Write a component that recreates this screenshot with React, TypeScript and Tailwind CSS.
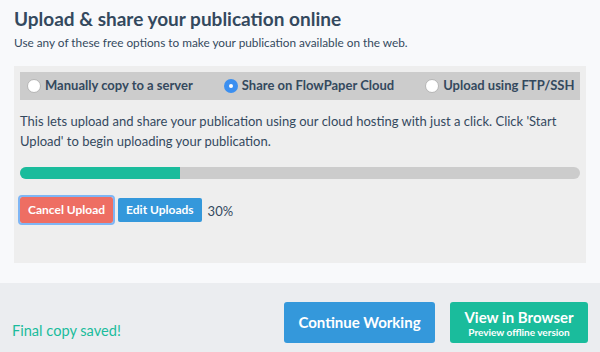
import React from "react";

function Radio({ checked, label }: { checked?: boolean; label: string }) {
  return (
    <label className="flex items-center gap-[4px]">
      {checked ? (
        <span className="w-[14px] h-[14px] rounded-full bg-[#3b8ff0] flex items-center justify-center">
          <span className="w-[4px] h-[4px] rounded-full bg-white" />
        </span>
      ) : (
        <span className="w-[14px] h-[14px] rounded-full bg-white border border-[#b5b5b5]" />
      )}
      <span className="text-[13px] font-bold text-[#34495e]">{label}</span>
    </label>
  );
}

export default function App() {
  return (
    <div
      className="w-[600px] h-[352px] bg-[#f8f9fb] flex flex-col"
      style={{ fontFamily: "Lato, 'Open Sans', sans-serif" }}
    >
      <div className="px-[14px] pt-[6px] flex-1">
        <h1 className="text-[19px] font-bold text-[#34495e] leading-[25px]">
          Upload &amp; share your publication online
        </h1>
        <p className="text-[11.8px] text-[#34495e] leading-[16px] mt-[4px]">
          Use any of these free options to make your publication available on the web.
        </p>
        <div className="mt-[15px] w-[572px] h-[197px] bg-[#eeeeee] px-[6px] pt-[6px]">
          <div className="h-[28px] bg-[#cccccc] flex items-center pl-[7px] gap-[31px]">
            <Radio label="Manually copy to a server" />
            <Radio checked label="Share on FlowPaper Cloud" />
            <Radio label="Upload using FTP/SSH" />
          </div>
          <p className="text-[13px] text-[#34495e] leading-[20px] mt-[11px]">
            This lets upload and share your publication using our cloud hosting with just a click. Click 'Start Upload' to begin uploading your publication.
          </p>
          <div className="mt-[16px] h-[12px] w-[560px] rounded-full bg-[#cccccc] overflow-hidden">
            <div className="h-full w-[160px] bg-[#1abc9c]" />
          </div>
          <div className="mt-[18px] flex items-center">
            <button className="h-[26px] px-[8px] rounded-[2px] bg-[#ee6e63] text-white text-[12px] font-bold outline outline-2 outline-[#7fb6f5] outline-offset-0">
              Cancel Upload
            </button>
            <button className="ml-[5px] h-[24px] px-[8px] rounded-[2px] bg-[#3498db] text-white text-[12px] font-bold">
              Edit Uploads
            </button>
            <span className="ml-[6px] mt-[4px] text-[13px] text-[#34495e]">30%</span>
          </div>
        </div>
      </div>
      <div className="h-[69px] bg-[#ebedf0] flex items-center pl-[12px] pr-[12px]">
        <span className="mt-[27px] text-[14.6px] text-[#1abc9c]">Final copy saved!</span>
        <div className="ml-auto flex gap-[15px] mt-[10px]">
          <button className="w-[151px] h-[41px] rounded-[3px] bg-[#3498db] text-white text-[15px] font-bold">
            Continue Working
          </button>
          <button className="w-[138px] h-[41px] rounded-[3px] bg-[#1abc9c] text-white flex flex-col items-center justify-center">
            <span className="text-[15px] font-bold leading-[18px]">View in Browser</span>
            <span className="text-[10px] font-bold leading-[12px]">Preview offline version</span>
          </button>
        </div>
      </div>
    </div>
  );
}
